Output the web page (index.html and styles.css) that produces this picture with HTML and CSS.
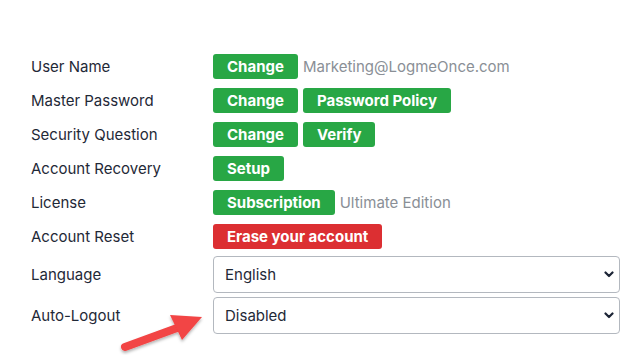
FILE: index.html
```html
<html>
<head>
<link rel="stylesheet" href="styles.css">
</head>
<body>
  <div class="settings">
    <div class="row">
      <div class="label">User Name</div>
      <div class="ctrl">
        <span class="btn green">Change</span>
        <span class="note">Marketing@LogmeOnce.com</span>
      </div>
    </div>
    <div class="row">
      <div class="label">Master Password</div>
      <div class="ctrl">
        <span class="btn green">Change</span>
        <span class="btn green">Password Policy</span>
      </div>
    </div>
    <div class="row">
      <div class="label">Security Question</div>
      <div class="ctrl">
        <span class="btn green">Change</span>
        <span class="btn green">Verify</span>
      </div>
    </div>
    <div class="row">
      <div class="label">Account Recovery</div>
      <div class="ctrl">
        <span class="btn green">Setup</span>
      </div>
    </div>
    <div class="row">
      <div class="label">License</div>
      <div class="ctrl">
        <span class="btn green">Subscription</span>
        <span class="note">Ultimate Edition</span>
      </div>
    </div>
    <div class="row">
      <div class="label">Account Reset</div>
      <div class="ctrl">
        <span class="btn red">Erase your account</span>
      </div>
    </div>
    <div class="row sel-row first">
      <div class="label">Language</div>
      <div class="ctrl">
        <div class="select-box">
          <select><option>English</option></select>
          <svg class="chev" width="10" height="7" viewBox="0 0 10 7"><path d="M1.5 1.5 L5 5 L8.5 1.5" fill="none" stroke="#1c2536" stroke-width="2.2" stroke-linecap="round" stroke-linejoin="round"/></svg>
        </div>
      </div>
    </div>
    <div class="row sel-row">
      <div class="label">Auto-Logout</div>
      <div class="ctrl">
        <div class="select-box">
          <select><option>Disabled</option></select>
          <svg class="chev" width="10" height="7" viewBox="0 0 10 7"><path d="M1.5 1.5 L5 5 L8.5 1.5" fill="none" stroke="#1c2536" stroke-width="2.2" stroke-linecap="round" stroke-linejoin="round"/></svg>
        </div>
      </div>
    </div>
  </div>

  <svg class="pointer" width="110" height="50" viewBox="0 0 110 50">
    <defs>
      <filter id="sh" x="-20%" y="-20%" width="140%" height="160%">
        <feDropShadow dx="0" dy="2" stdDeviation="1.5" flood-color="#000" flood-opacity="0.3"/>
      </filter>
    </defs>
    <g filter="url(#sh)">
      <line x1="10" y1="42" x2="62" y2="23" stroke="#f24444" stroke-width="8" stroke-linecap="round"/>
      <polygon points="87,12 55,10 67,35" fill="#f24444"/>
    </g>
  </svg>
</body>
</html>
```

FILE: styles.css
```css
body {
  margin: 0;
  font-family: Inter, "Noto Sans", sans-serif;
  font-size: 15px;
  color: #1f2937;
  background: #fff;
}

.settings {
  padding: 54px 0 0 31px;
}

.row {
  display: flex;
  align-items: center;
  height: 25px;
  margin-bottom: 9px;
}

.row.sel-row {
  height: 37px;
  margin-bottom: 4px;
}

.row.first {
  margin-top: -2px;
}

.label {
  width: 182px;
  flex-shrink: 0;
}

.ctrl {
  display: flex;
  align-items: center;
  gap: 5px;
}

.btn {
  display: inline-flex;
  align-items: center;
  height: 25px;
  padding: 0 14px;
  border-radius: 3px;
  color: #fff;
  font-weight: 700;
  font-size: 15px;
}

.green {
  background: #28a745;
}

.red {
  background: #dc2f32;
}

.note {
  color: #8a8f96;
}

.select-box {
  position: relative;
  width: 407px;
  height: 37px;
}

.select-box select {
  appearance: none;
  -webkit-appearance: none;
  width: 100%;
  height: 100%;
  border: 1px solid #b3b8bf;
  border-radius: 4px;
  background: #fff;
  padding: 0 11px;
  font-family: Inter, "Noto Sans", sans-serif;
  font-size: 15px;
  color: #1f2937;
}

.chev {
  position: absolute;
  right: 6px;
  top: 15px;
  pointer-events: none;
}

.pointer {
  position: absolute;
  left: 115px;
  top: 305px;
}
```
